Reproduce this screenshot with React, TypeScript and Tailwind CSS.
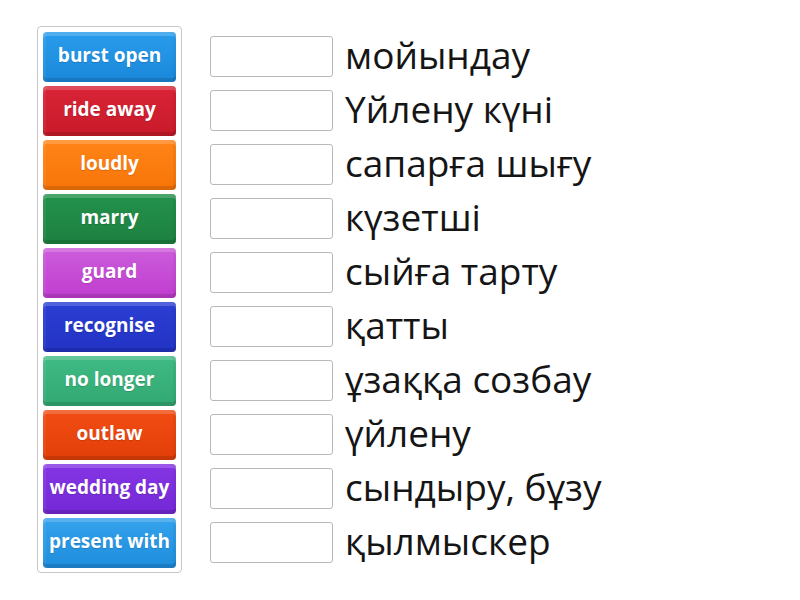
const cards = [
  { label: "burst open", bg: "bg-[linear-gradient(#2a9cec,#1a88da)]" },
  { label: "ride away", bg: "bg-[linear-gradient(#d92436,#c81a2a)]" },
  { label: "loudly", bg: "bg-[linear-gradient(#ff8418,#f87508)]" },
  { label: "marry", bg: "bg-[linear-gradient(#23924c,#1d8040)]" },
  { label: "guard", bg: "bg-[linear-gradient(#cc5ddb,#c03ccf)]" },
  { label: "recognise", bg: "bg-[linear-gradient(#2c3fd4,#2233c4)]" },
  { label: "no longer", bg: "bg-[linear-gradient(#40bb85,#32a872)]" },
  { label: "outlaw", bg: "bg-[linear-gradient(#f24d14,#e23e08)]" },
  { label: "wedding day", bg: "bg-[linear-gradient(#8535e4,#7428d6)]" },
  { label: "present with", bg: "bg-[linear-gradient(#34a2ec,#1e8ddc)]" },
];

const targets = [
  "мойындау",
  "Үйлену күні",
  "сапарға шығу",
  "күзетші",
  "сыйға тарту",
  "қатты",
  "ұзаққа созбау",
  "үйлену",
  "сындыру, бұзу",
  "қылмыскер",
];

const Card = ({ label, bg }: { label: string; bg: string }) => (
  <div
    className={`${bg} h-[50px] w-[133px] rounded-[4px] flex items-center justify-center pb-[4px] text-white font-bold text-[19px] whitespace-nowrap shadow-[inset_0_4px_0_rgba(255,255,255,0.18),inset_0_-4px_0_rgba(0,0,0,0.12),inset_3px_0_0_rgba(255,255,255,0.06),inset_-3px_0_0_rgba(0,0,0,0.04)] [text-shadow:0_1px_1px_rgba(0,0,0,0.15)]`}
  >
    {label}
  </div>
);

export default function App() {
  return (
    <div
      className="w-[800px] h-[600px] bg-white flex items-start pt-[26px] pl-[37px]"
      style={{ fontFamily: '"Open Sans", sans-serif' }}
    >
      <div className="w-[145px] border border-[#c8c8c8] rounded-[4px] pt-[5px] pb-[4px] pl-[5px] flex flex-col gap-[4px]">
        {cards.map((c) => (
          <Card key={c.label} {...c} />
        ))}
      </div>
      <div className="ml-[28px] mt-[10px] flex flex-col gap-[13px]">
        {targets.map((t) => (
          <div key={t} className="flex items-center h-[41px]">
            <div className="w-[123px] h-[41px] border border-[#b8b8b8] rounded-[3px] bg-white" />
            <span className="ml-[12px] -mt-[4px] text-[37px] leading-none text-[#151515] whitespace-nowrap">
              {t}
            </span>
          </div>
        ))}
      </div>
    </div>
  );
}
